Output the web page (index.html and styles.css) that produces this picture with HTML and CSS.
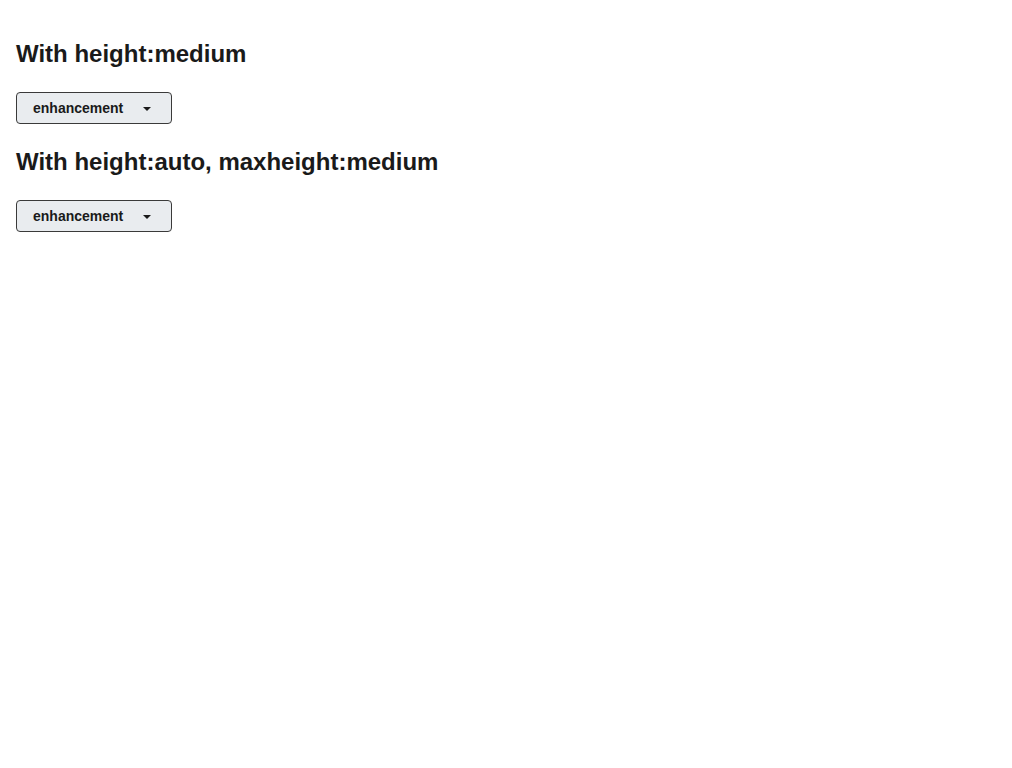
FILE: index.html
```html
<!DOCTYPE html>
<html>
<head>
<meta charset="utf-8">
<link rel="stylesheet" href="styles.css">
</head>
<body>
<main class="page">
  <section class="demo">
    <h2 class="title">With height:medium</h2>
    <button class="select" type="button">
      <span class="label">enhancement</span>
      <span class="caret"></span>
    </button>
  </section>
  <section class="demo">
    <h2 class="title">With height:auto, maxheight:medium</h2>
    <button class="select" type="button">
      <span class="label">enhancement</span>
      <span class="caret"></span>
    </button>
  </section>
</main>
</body>
</html>
```
FILE: styles.css
```css
html, body {
  margin: 0;
  padding: 0;
  background: #ffffff;
  font-family: "Liberation Sans", Arial, sans-serif;
  color: #1a1a1a;
}
.page {
  padding: 16px;
}
.demo {
  display: flex;
  flex-direction: column;
  align-items: flex-start;
}
.title {
  margin: 24px 0 24px;
  font-size: 24px;
  line-height: 28px;
  font-weight: 700;
  color: #1a1a1a;
}
.select {
  box-sizing: border-box;
  display: flex;
  align-items: center;
  width: 156px;
  height: 32px;
  padding: 0 0 0 16px;
  margin: 0;
  background: #e9ecef;
  border: 1px solid #3a3a3a;
  border-radius: 4px;
  font-family: "Liberation Sans", Arial, sans-serif;
  font-size: 14px;
  font-weight: 700;
  color: #1a1a1a;
  cursor: pointer;
}
.label {
  line-height: 16px;
}
.caret {
  width: 0;
  height: 0;
  margin-left: 20px;
  margin-top: 2px;
  border-left: 4px solid transparent;
  border-right: 4px solid transparent;
  border-top: 4px solid #1a1a1a;
}
```
